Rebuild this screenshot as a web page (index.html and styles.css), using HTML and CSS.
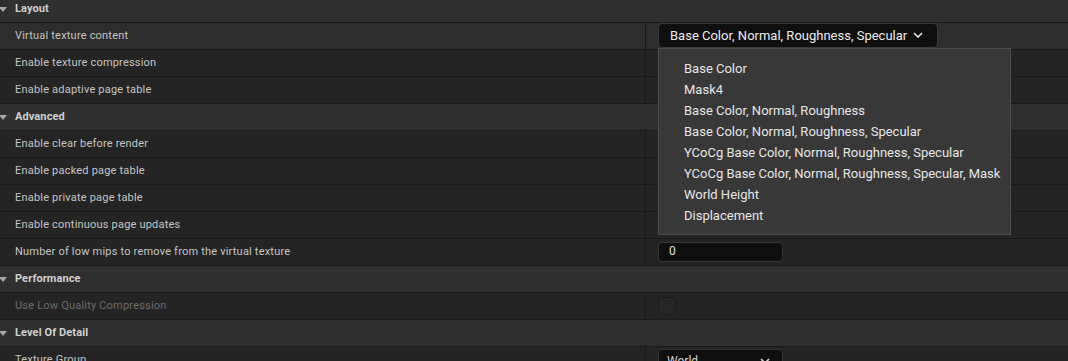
FILE: index.html
```html
<!DOCTYPE html>
<html>
<head>
<meta charset="utf-8">
<link rel="stylesheet" href="styles.css">
</head>
<body>
<div class="panel">
  <div class="row header"><span class="tri"></span><span class="htext">Layout</span></div>
  <div class="row hover">
    <div class="label">Virtual texture content</div>
    <div class="value">
      <div class="combo-wrap">
        <div class="combo">Base Color, Normal, Roughness, Specular<svg class="chev" width="10" height="6" viewBox="0 0 10 6"><path d="M1 1 L5 5 L9 1" fill="none" stroke="#e8e8e8" stroke-width="1.6"/></svg></div>
        <div class="menu">
          <div class="item">Base Color</div>
          <div class="item">Mask4</div>
          <div class="item">Base Color, Normal, Roughness</div>
          <div class="item">Base Color, Normal, Roughness, Specular</div>
          <div class="item">YCoCg Base Color, Normal, Roughness, Specular</div>
          <div class="item">YCoCg Base Color, Normal, Roughness, Specular, Mask</div>
          <div class="item">World Height</div>
          <div class="item">Displacement</div>
        </div>
      </div>
    </div>
  </div>
  <div class="row"><div class="label">Enable texture compression</div><div class="value"></div></div>
  <div class="row"><div class="label">Enable adaptive page table</div><div class="value"></div></div>
  <div class="row header"><span class="tri"></span><span class="htext">Advanced</span></div>
  <div class="row"><div class="label">Enable clear before render</div><div class="value"></div></div>
  <div class="row"><div class="label">Enable packed page table</div><div class="value"></div></div>
  <div class="row"><div class="label">Enable private page table</div><div class="value"></div></div>
  <div class="row"><div class="label">Enable continuous page updates</div><div class="value"></div></div>
  <div class="row"><div class="label">Number of low mips to remove from the virtual texture</div><div class="value"><div class="num">0</div></div></div>
  <div class="row header"><span class="tri"></span><span class="htext">Performance</span></div>
  <div class="row"><div class="label disabled">Use Low Quality Compression</div><div class="value"><div class="check"></div></div></div>
  <div class="row header"><span class="tri"></span><span class="htext">Level Of Detail</span></div>
  <div class="row"><div class="label">Texture Group</div><div class="value"><div class="small-combo"><span>World</span><svg class="chev2" width="10" height="6" viewBox="0 0 10 6"><path d="M1 1 L5 5 L9 1" fill="none" stroke="#d0d0d0" stroke-width="1.6"/></svg></div></div></div>
</div>
</body>
</html>
```

FILE: styles.css
```css
html, body {
  margin: 0;
  padding: 0;
  background: #242424;
  overflow: hidden;
}
body {
  width: 1068px;
  height: 361px;
  font-family: Roboto, "Liberation Sans", sans-serif;
}
.panel {
  margin-top: -4px;
}
.row {
  height: 26px;
  border-bottom: 1px solid #1a1a1a;
  display: flex;
  align-items: stretch;
  background: #242424;
}
.row.hover {
  background: #2d2d2d;
}
.row.header {
  background: #2f2f2f;
  align-items: center;
}
.tri {
  width: 0;
  height: 0;
  border-left: 4px solid transparent;
  border-right: 4px solid transparent;
  border-top: 5px solid #a8a8a8;
  margin-left: -1px;
  margin-right: 8px;
}
.htext {
  font-size: 11px;
  font-weight: bold;
  color: #cfcfcf;
  letter-spacing: 0.1px;
  padding-bottom: 2px;
}
.label {
  width: 630px;
  padding-left: 15px;
  padding-bottom: 1px;
  box-sizing: content-box;
  border-right: 1px solid #1a1a1a;
  display: flex;
  align-items: center;
  font-size: 11px;
  letter-spacing: 0.2px;
  color: #c4c4c4;
}
.label.disabled {
  color: #6b6b6b;
}
.value {
  flex: 1;
  padding-left: 12px;
  display: flex;
  align-items: center;
}
.combo-wrap {
  position: relative;
  align-self: flex-start;
}
.combo {
  box-sizing: border-box;
  width: 280px;
  height: 25px;
  background: #0f0f0f;
  border: 1px solid #3a3a3a;
  border-radius: 4px;
  display: flex;
  align-items: center;
  padding-left: 11px;
  padding-bottom: 1px;
  font-size: 13px;
  color: #ececec;
}
.chev {
  margin-left: 6px;
}
.menu {
  position: absolute;
  left: 0;
  top: 25px;
  box-sizing: border-box;
  width: 353px;
  height: 187px;
  background: #383838;
  border: 1px solid #4d4d4d;
  padding: 9px 0 0 25px;
  z-index: 2;
}
.item {
  height: 21px;
  line-height: 21px;
  font-size: 13px;
  color: #e6e6e6;
  white-space: nowrap;
}
.num {
  box-sizing: border-box;
  width: 125px;
  height: 20px;
  background: #0f0f0f;
  border: 1px solid #353535;
  border-radius: 4px;
  font-size: 12px;
  color: #e0e0e0;
  padding-left: 10px;
  line-height: 17px;
}
.check {
  box-sizing: border-box;
  width: 18px;
  height: 18px;
  background: #262626;
  border: 1px solid #1b1b1b;
  border-radius: 3px;
}
.small-combo {
  box-sizing: border-box;
  width: 125px;
  height: 24px;
  margin-top: 2px;
  align-self: flex-start;
  background: #0f0f0f;
  border: 1px solid #353535;
  border-radius: 4px;
  display: flex;
  align-items: center;
  justify-content: space-between;
  padding: 0 12px 0 8px;
  font-size: 12px;
  color: #cfcfcf;
}
```
